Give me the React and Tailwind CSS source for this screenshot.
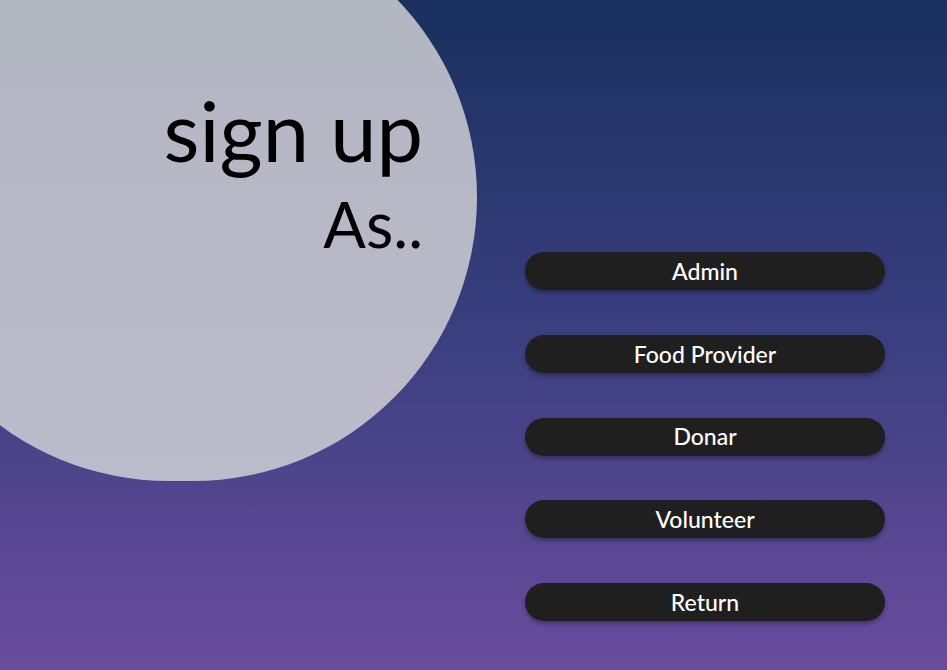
const roles = ['Admin', 'Food Provider', 'Donar', 'Volunteer', 'Return'];

export default function App() {
  return (
    <div
      className="relative w-full h-[670px] overflow-hidden bg-gradient-to-b from-[#19305e] via-[#3a3f80] to-[#6a4c9e]"
      style={{ fontFamily: 'Lato, "Noto Sans", sans-serif' }}
    >
      {/* big soft circle behind the title */}
      <div className="absolute left-[-115px] top-[-87px] w-[592px] h-[568px] rounded-full bg-gradient-to-b from-[#b1b6c0] to-[#bcbbcb]"></div>

      <div className="relative flex h-full">
        <div className="w-[525px] shrink-0 pt-[88px] pr-[102px] flex flex-col items-end text-black">
          <h1 className="text-[83px] leading-[85px]">sign up</h1>
          <h2 className="text-[63px] leading-[63px] mt-[19px]">As..</h2>
        </div>

        <div className="pt-[252px] flex flex-col gap-[44.75px]">
          {roles.map((role) => (
            <button
              key={role}
              className="w-[360px] h-[38px] rounded-full bg-[#1f1f1f] text-white text-[23px] font-medium shadow-[0_3px_4px_rgba(0,0,0,0.3)]"
            >
              {role}
            </button>
          ))}
        </div>
      </div>
    </div>
  );
}
